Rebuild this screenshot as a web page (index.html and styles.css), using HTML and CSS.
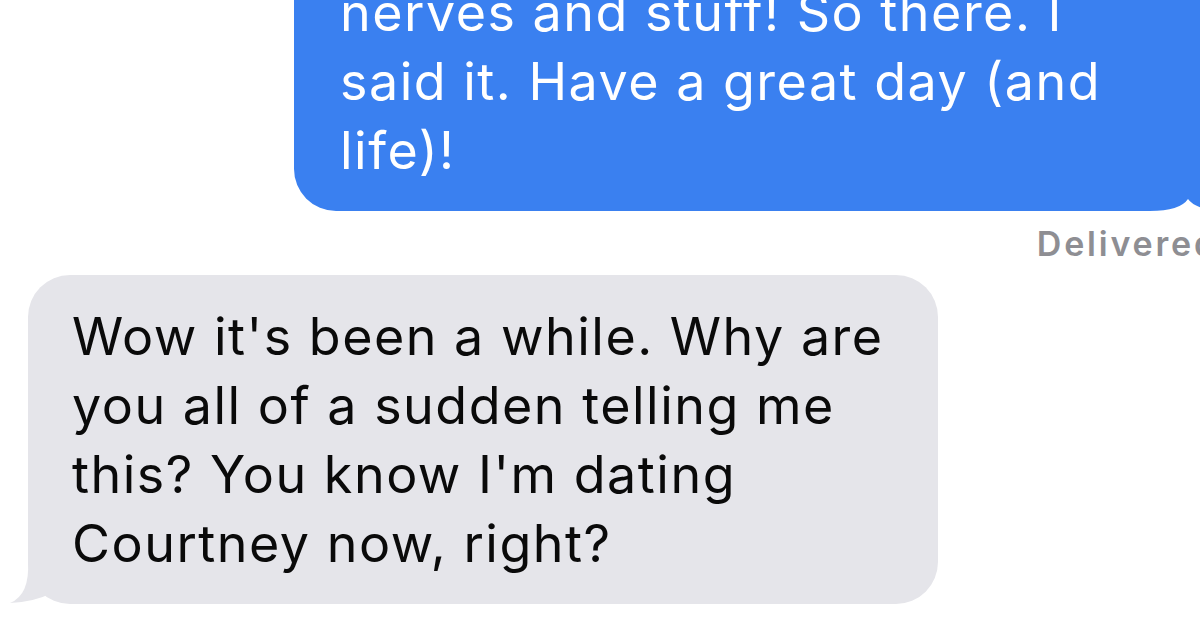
FILE: index.html
```html
<!DOCTYPE html>
<html lang="en">
<head>
<meta charset="utf-8">
<title>Messages</title>
<link rel="stylesheet" href="styles.css">
</head>
<body>
<div class="thread">
  <div class="row sent">
    <div class="bubble blue">
      <p class="msg">nerves and stuff! So there. I<br>said it. Have a great day (and<br>life)!</p>
      <svg class="notch" width="80" height="20" viewBox="0 0 80 20"><path d="M0 18 L10 18 Q40 18 48 6 Q55 16 80 18 L80 20 L0 20 Z" fill="#ffffff"/></svg>
    </div>
  </div>
  <div class="status">Delivered</div>
  <div class="row received">
    <div class="bubble gray">
      <p class="msg">Wow it's been a while. Why are<br>you all of a sudden telling me<br>this? You know I'm dating<br>Courtney now, right?</p>
      <svg class="tail" width="60" height="44" viewBox="0 0 60 44"><path d="M20 0 Q22 34 2 42 Q26 41 44 32 L60 20 L40 0 Z" fill="#e5e5ea"/></svg>
    </div>
  </div>
</div>
</body>
</html>
```
FILE: styles.css
```css
html, body {
  margin: 0;
  padding: 0;
  background: #ffffff;
  overflow: hidden;
}
body {
  width: 1200px;
  height: 630px;
  font-family: Inter, "Noto Sans", "Liberation Sans", sans-serif;
}
.thread {
  width: 1230px;
  display: flex;
  flex-direction: column;
}
.row {
  display: flex;
}
.sent {
  justify-content: flex-end;
}
.received {
  justify-content: flex-start;
  padding-left: 28px;
}
.bubble {
  position: relative;
  box-sizing: border-box;
  border-radius: 42px;
}
.msg {
  margin: 0;
  font-size: 52px;
  line-height: 69px;
  font-weight: 400;
  letter-spacing: 1.5px;
}
.blue {
  width: 936px;
  margin-top: -49px;
  padding: 27px 40px 26px 46px;
  border-radius: 42px 42px 0 42px;
  background: #3a80f0;
  color: #ffffff;
}
.notch {
  position: absolute;
  right: 10px;
  bottom: -2px;
  display: block;
}
.gray {
  width: 910px;
  margin-top: 13px;
  padding: 27px 40px 26px 44px;
  background: #e5e5ea;
  color: #0a0a0a;
}
.tail {
  position: absolute;
  left: -20px;
  bottom: -1px;
  display: block;
}
.status {
  margin-top: 15px;
  padding-right: 12px;
  text-align: right;
  font-size: 34px;
  line-height: 36px;
  font-weight: 600;
  letter-spacing: 2.8px;
  color: #8e8e93;
}
```
